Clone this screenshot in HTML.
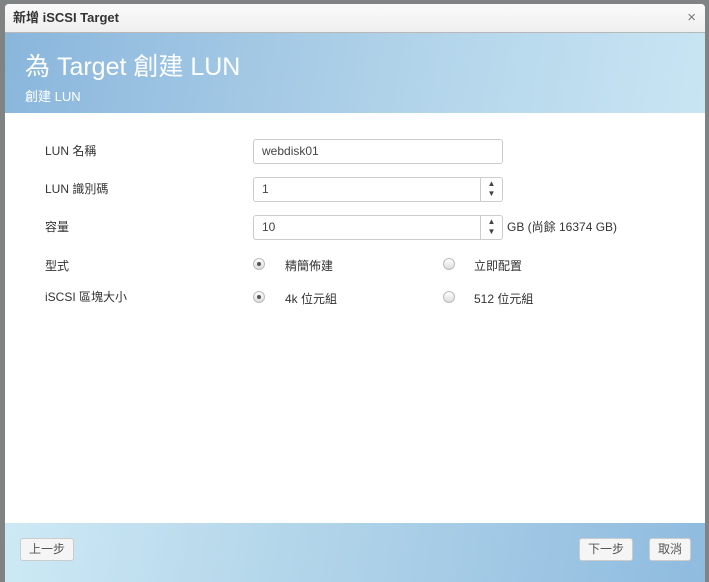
<!DOCTYPE html><html><head><meta charset="utf-8"><style>
body{margin:0;width:709px;height:582px;background:#808384;font-family:"Liberation Sans","Noto Sans CJK TC",sans-serif;position:relative;overflow:hidden}
.dlg{position:absolute;left:5px;top:4px;width:700px;height:578px;background:#fff;border-radius:4px 4px 0 0;overflow:hidden}
.hd{height:28px;background:linear-gradient(#fafafa,#efefef);border-bottom:1px solid #b8b8b8;font-size:13px;font-weight:bold;color:#333;line-height:28px;padding-left:8px}
.x{position:absolute;right:9px;top:0;font-size:15px;color:#777;font-weight:normal}
.ban{position:absolute;top:29px;left:0;width:700px;height:80px;background:linear-gradient(100deg,#8ab6dc,#b0d2e9 55%,#c8e5f3);color:#fff}
.ban h1{margin:0;position:absolute;left:20px;top:18px;font-size:25px;font-weight:normal;line-height:32px}
.ban h2{margin:0;position:absolute;left:20px;top:55px;font-size:13px;font-weight:normal;line-height:17px}
.lbl{position:absolute;left:40px;font-size:12px;color:#333;line-height:16px}
.inp{position:absolute;left:248px;width:250px;height:25px;border:1px solid #ccc;border-radius:3px;font-size:12px;color:#444;line-height:23px;padding-left:8px;box-sizing:border-box}
.sp{position:absolute;right:0;top:0;width:22px;height:23px;border-left:1px solid #ccc;font-size:8px;color:#444;text-align:center;line-height:10px;padding-top:1px;box-sizing:border-box}
.r{position:absolute;width:10px;height:10px;border:1px solid #bbb;border-radius:50%;background:linear-gradient(#fff,#ddd)}
.r.on::after{content:"";position:absolute;left:3px;top:3px;width:4px;height:4px;border-radius:50%;background:#555}
.t{position:absolute;font-size:12px;color:#333;line-height:16px}
.ft{position:absolute;top:519px;left:0;width:700px;height:60px;background:linear-gradient(100deg,#cde9f5,#b4d6ea 40%,#8fbbdf)}
.b{position:absolute;top:15px;height:21px;border:1px solid #ccc;border-radius:3px;background:#f5f5f5;font-size:12px;color:#555;line-height:21px;text-align:center}
</style></head><body><div class="dlg">
<div class="hd">新增 iSCSI Target<span class="x">×</span></div>
<div class="ban"><h1>為 Target 創建 LUN</h1><h2>創建 LUN</h2></div>
<div class="lbl" style="top:139px">LUN 名稱</div>
<div class="inp" style="top:135px">webdisk01</div>
<div class="lbl" style="top:177px">LUN 識別碼</div>
<div class="inp" style="top:173px">1<div class="sp">▲<br>▼</div></div>
<div class="lbl" style="top:215px">容量</div>
<div class="inp" style="top:211px">10<div class="sp">▲<br>▼</div></div>
<div class="t" style="left:502px;top:215px">GB (尚餘 16374 GB)</div>
<div class="lbl" style="top:254px">型式</div>
<div class="r on" style="left:248px;top:254px"></div><div class="t" style="left:280px;top:254px">精簡佈建</div>
<div class="r" style="left:438px;top:254px"></div><div class="t" style="left:469px;top:254px">立即配置</div>
<div class="lbl" style="top:285px">iSCSI 區塊大小</div>
<div class="r on" style="left:248px;top:287px"></div><div class="t" style="left:280px;top:287px">4k 位元組</div>
<div class="r" style="left:438px;top:287px"></div><div class="t" style="left:469px;top:287px">512 位元組</div>
<div class="ft">
<div class="b" style="left:15px;width:52px">上一步</div>
<div class="b" style="left:574px;width:52px">下一步</div>
<div class="b" style="left:644px;width:40px">取消</div>
</div></div></body></html>
